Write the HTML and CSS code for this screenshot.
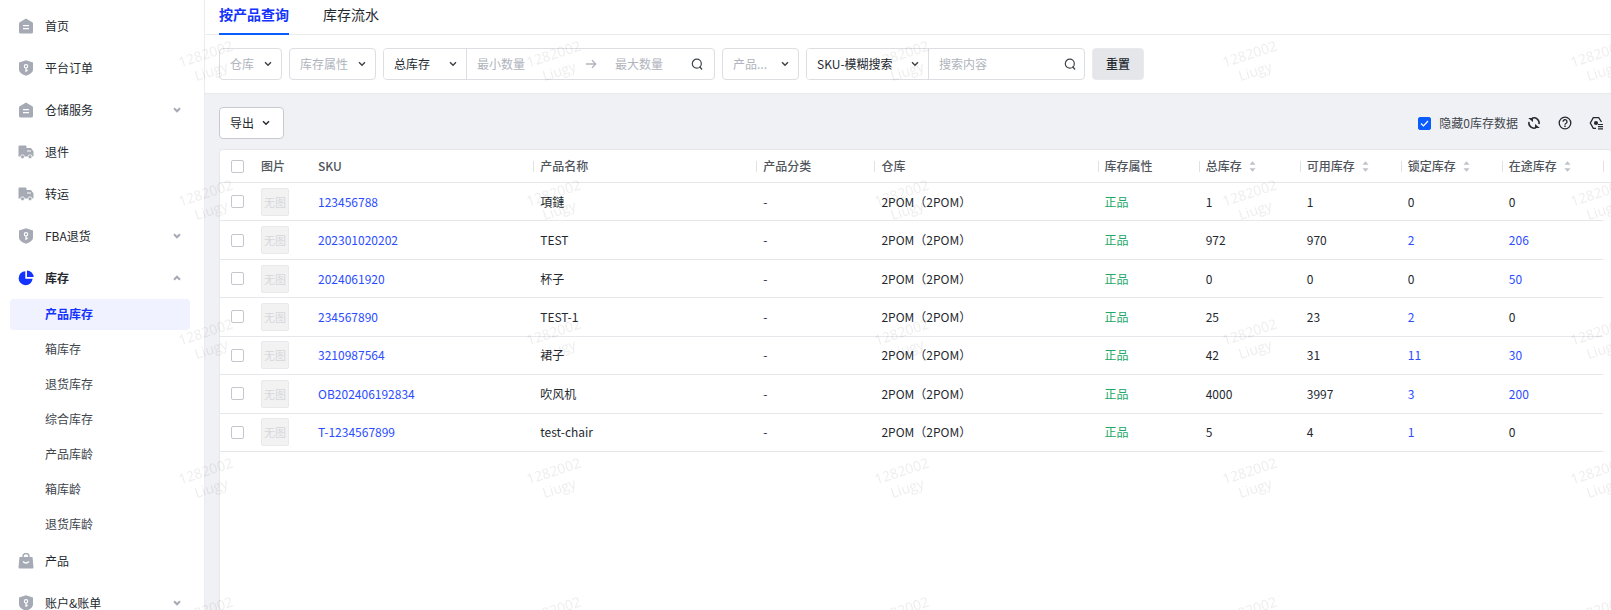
FILE: index.html
```html
<!DOCTYPE html>
<html lang="zh-CN">
<head>
  <meta charset="UTF-8">
  <meta name="viewport" content="width=device-width, initial-scale=1.0">
  <title>产品库存</title>
  <link rel="stylesheet" href="styles.css">
</head>
<body>
  <!-- icons -->
  <svg class="sprite" aria-hidden="true">
    <symbol id="i-home" viewBox="0 0 16 16"><path d="M8 .5 14.300 4.200Q15 4.700 15 5.500V14Q15 15.500 13.500 15.500H2.500Q1 15.500 1 14V5.500Q1 4.700 1.700 4.200Z" fill="currentColor"/><path d="M5 7.700h6M5 10.700h6" stroke="#fff" stroke-width="1.200"/></symbol>
    <symbol id="i-shield" viewBox="0 0 16 16"><path d="M8 .3 15 2.500V9.500Q15 13.500 8 15.800 1 13.500 1 9.500V2.500Z" fill="currentColor"/><circle cx="8" cy="6.300" r="1.700" fill="none" stroke="#fff" stroke-width="1.100"/><path d="M8 8v4M8 10.300h1.800" stroke="#fff" stroke-width="1.200"/></symbol>
    <symbol id="i-truck" viewBox="0 0 16 16"><path d="M1.500 1.500h6Q8.500 1.500 8.500 2.500V4H13l2.500 3.500V12.500H.5V2.500Q.5 1.500 1.500 1.500Z" fill="currentColor"/><path d="M9 7h4" stroke="#fff"/><circle cx="4.500" cy="12.800" r="2" fill="currentColor" stroke="#fff" stroke-width=".8"/><circle cx="12" cy="12.800" r="2" fill="currentColor" stroke="#fff" stroke-width=".8"/></symbol>
    <symbol id="i-pie" viewBox="0 0 16 16"><path d="M7.300 1.200V8.700H14.600A7 7 0 1 1 7.300 1.200Z" fill="currentColor"/><path d="M9 .4A7 7 0 0 1 15.700 7.100H9Z" fill="currentColor"/></symbol>
    <symbol id="i-bag" viewBox="0 0 16 16"><path d="M5 5V3.500a3 3 0 0 1 6 0V5" fill="none" stroke="currentColor" stroke-width="1.500"/><path d="M1.500 4h13l1 10.500q0 1-1 1h-13q-1 0-1-1Z" fill="currentColor"/><path d="M5 8.500q3 3 6 0" fill="none" stroke="#fff" stroke-width="1.300"/></symbol>
    <symbol id="i-down" viewBox="0 0 8 8"><path d="m1 2.300 3 3 3-3" fill="none" stroke="currentColor" stroke-width="1.500"/></symbol>
    <symbol id="i-fold" viewBox="0 0 8 8"><path d="m1 2.300 3 3 3-3" fill="none" stroke="currentColor" stroke-width="2"/></symbol>
    <symbol id="i-up" viewBox="0 0 8 8"><path d="m1 5.700 3-3 3 3" fill="none" stroke="currentColor" stroke-width="2"/></symbol>
    <symbol id="i-arrow" viewBox="0 0 12 12"><path d="M1 6h9.500M7 2.300 10.700 6 7 9.700" fill="none" stroke="currentColor" stroke-width="1.300"/></symbol>
    <symbol id="i-search" viewBox="0 0 12 12"><circle cx="5.800" cy="5.700" r="4.500" fill="none" stroke="currentColor" stroke-width="1.200"/><path d="m8.500 8.500 2.500 3" stroke="currentColor" stroke-width="1.300"/></symbol>
    <symbol id="i-refresh" viewBox="0 0 14 14"><path d="M5 2.200A5.200 5.200 0 0 1 12 8.200M9 11.800A5.200 5.200 0 0 1 2 5.800" fill="none" stroke="currentColor" stroke-width="1.500"/><path d="M1.200 2H6V6ZM12.800 12H8V8Z" fill="currentColor"/></symbol>
    <symbol id="i-help" viewBox="0 0 14 14"><circle cx="7" cy="7" r="5.800" fill="none" stroke="currentColor" stroke-width="1.300"/><path d="M5 5.800a2 2 0 1 1 2.900 1.700Q7 8 7 8.700" fill="none" stroke="currentColor" stroke-width="1.300"/><path d="M7 9.500v1.400" stroke="currentColor" stroke-width="1.400"/></symbol>
    <symbol id="i-setting" viewBox="0 0 14 14"><path d="M7 12.300H4.300L1.300 7l3-5.300h5.400L12.500 6" fill="none" stroke="currentColor" stroke-width="1.300"/><circle cx="7" cy="7" r="2.100" fill="currentColor"/><path d="M9 8.500h5M9 10.700h5M9 12.900h5" stroke="currentColor" stroke-width="1.200"/></symbol>
    <symbol id="i-sort" viewBox="0 0 8 12"><path d="M4 0 7.500 4H.5ZM4 12 .5 8H7.500Z" fill="currentColor"/></symbol>
  </svg>

  <div class="layout">
    <nav class="sidebar">
      <ul class="menu">
        <li><a href="#"><svg class="menu-icon"><use href="#i-home"/></svg>首页</a></li>
        <li><a href="#"><svg class="menu-icon"><use href="#i-shield"/></svg>平台订单</a></li>
        <li><a href="#"><svg class="menu-icon"><use href="#i-home"/></svg>仓储服务<svg class="caret"><use href="#i-fold"/></svg></a></li>
        <li><a href="#"><svg class="menu-icon"><use href="#i-truck"/></svg>退件</a></li>
        <li><a href="#"><svg class="menu-icon"><use href="#i-truck"/></svg>转运</a></li>
        <li><a href="#"><svg class="menu-icon"><use href="#i-shield"/></svg>FBA退货<svg class="caret"><use href="#i-fold"/></svg></a></li>
        <li class="open">
          <a href="#"><svg class="menu-icon"><use href="#i-pie"/></svg>库存<svg class="caret"><use href="#i-up"/></svg></a>
          <ul class="submenu">
            <li><a class="active" href="#">产品库存</a></li>
            <li><a href="#">箱库存</a></li>
            <li><a href="#">退货库存</a></li>
            <li><a href="#">综合库存</a></li>
            <li><a href="#">产品库龄</a></li>
            <li><a href="#">箱库龄</a></li>
            <li><a href="#">退货库龄</a></li>
          </ul>
        </li>
        <li><a href="#"><svg class="menu-icon"><use href="#i-bag"/></svg>产品</a></li>
        <li><a href="#"><svg class="menu-icon"><use href="#i-shield"/></svg>账户&amp;账单<svg class="caret"><use href="#i-fold"/></svg></a></li>
      </ul>
    </nav>

    <main class="main">
      <header class="head">
        <div class="tabs">
          <a class="tab active" href="#">按产品查询</a>
          <a class="tab" href="#">库存流水</a>
        </div>
        <form class="filters">
          <select class="field w-store empty" aria-label="仓库"><option>仓库</option></select>
          <select class="field w-attr empty" aria-label="库存属性"><option>库存属性</option></select>
          <div class="field group w-range">
            <select class="w-type" aria-label="数量类型"><option>总库存</option></select>
            <input class="min" type="text" placeholder="最小数量" aria-label="最小数量">
            <svg class="arrow"><use href="#i-arrow"/></svg>
            <input type="text" placeholder="最大数量" aria-label="最大数量">
            <svg class="search"><use href="#i-search"/></svg>
          </div>
          <select class="field w-cat empty" aria-label="产品分类"><option>产品...</option></select>
          <div class="field group w-search">
            <select class="w-mode" aria-label="搜索方式"><option>SKU-模糊搜索</option></select>
            <input type="text" placeholder="搜索内容" aria-label="搜索内容">
            <svg class="search"><use href="#i-search"/></svg>
          </div>
          <button class="reset" type="reset">重置</button>
        </form>
      </header>

      <section class="content">
        <div class="toolbar">
          <button class="export">导出<svg class="caret"><use href="#i-down"/></svg></button>
          <div class="tools">
            <label class="hide-zero"><input type="checkbox" checked>隐藏0库存数据</label>
            <button class="tool" aria-label="刷新"><svg><use href="#i-refresh"/></svg></button>
            <button class="tool" aria-label="帮助"><svg><use href="#i-help"/></svg></button>
            <button class="tool" aria-label="设置"><svg><use href="#i-setting"/></svg></button>
          </div>
        </div>

        <div class="card">
          <table>
            <colgroup>
              <col class="c-check"><col class="c-img"><col class="c-sku"><col class="c-wide"><col class="c-cat"><col class="c-wide">
              <col class="c-num"><col class="c-num"><col class="c-num"><col class="c-num"><col class="c-num"><col class="c-gutter">
            </colgroup>
            <thead>
              <tr>
                <th class="check"><input type="checkbox" aria-label="全选"></th>
                <th>图片</th>
                <th>SKU</th>
                <th class="sep">产品名称</th>
                <th class="sep">产品分类</th>
                <th class="sep">仓库</th>
                <th class="sep">库存属性</th>
                <th class="sep">总库存<svg class="sort"><use href="#i-sort"/></svg></th>
                <th class="sep">可用库存<svg class="sort"><use href="#i-sort"/></svg></th>
                <th class="sep">锁定库存<svg class="sort"><use href="#i-sort"/></svg></th>
                <th class="sep">在途库存<svg class="sort"><use href="#i-sort"/></svg></th>
                <th class="sep gutter"></th>
              </tr>
            </thead>
            <tbody>
              <tr>
                <td class="check"><input type="checkbox" aria-label="123456788"></td>
                <td><div class="thumb">无图</div></td>
                <td><a href="#">123456788</a></td>
                <td>項鏈</td><td>-</td><td>2POM（2POM）</td>
                <td class="good">正品</td>
                <td>1</td><td>1</td><td>0</td><td>0</td><td class="gutter"></td>
              </tr>
              <tr>
                <td class="check"><input type="checkbox" aria-label="202301020202"></td>
                <td><div class="thumb">无图</div></td>
                <td><a href="#">202301020202</a></td>
                <td>TEST</td><td>-</td><td>2POM（2POM）</td>
                <td class="good">正品</td>
                <td>972</td><td>970</td><td><a href="#">2</a></td><td><a href="#">206</a></td><td class="gutter"></td>
              </tr>
              <tr>
                <td class="check"><input type="checkbox" aria-label="2024061920"></td>
                <td><div class="thumb">无图</div></td>
                <td><a href="#">2024061920</a></td>
                <td>杯子</td><td>-</td><td>2POM（2POM）</td>
                <td class="good">正品</td>
                <td>0</td><td>0</td><td>0</td><td><a href="#">50</a></td><td class="gutter"></td>
              </tr>
              <tr>
                <td class="check"><input type="checkbox" aria-label="234567890"></td>
                <td><div class="thumb">无图</div></td>
                <td><a href="#">234567890</a></td>
                <td>TEST-1</td><td>-</td><td>2POM（2POM）</td>
                <td class="good">正品</td>
                <td>25</td><td>23</td><td><a href="#">2</a></td><td>0</td><td class="gutter"></td>
              </tr>
              <tr>
                <td class="check"><input type="checkbox" aria-label="3210987564"></td>
                <td><div class="thumb">无图</div></td>
                <td><a href="#">3210987564</a></td>
                <td>裙子</td><td>-</td><td>2POM（2POM）</td>
                <td class="good">正品</td>
                <td>42</td><td>31</td><td><a href="#">11</a></td><td><a href="#">30</a></td><td class="gutter"></td>
              </tr>
              <tr>
                <td class="check"><input type="checkbox" aria-label="OB202406192834"></td>
                <td><div class="thumb">无图</div></td>
                <td><a href="#">OB202406192834</a></td>
                <td>吹风机</td><td>-</td><td>2POM（2POM）</td>
                <td class="good">正品</td>
                <td>4000</td><td>3997</td><td><a href="#">3</a></td><td><a href="#">200</a></td><td class="gutter"></td>
              </tr>
              <tr>
                <td class="check"><input type="checkbox" aria-label="T-1234567899"></td>
                <td><div class="thumb">无图</div></td>
                <td><a href="#">T-1234567899</a></td>
                <td>test-chair</td><td>-</td><td>2POM（2POM）</td>
                <td class="good">正品</td>
                <td>5</td><td>4</td><td><a href="#">1</a></td><td>0</td><td class="gutter"></td>
              </tr>
            </tbody>
          </table>
        </div>
      </section>
    </main>
  </div>

  <svg class="watermark" aria-hidden="true">
    <defs>
      <pattern id="wm" x="32" y="-15" width="348" height="139" patternUnits="userSpaceOnUse">
        <g transform="translate(174 70) rotate(-18)" text-anchor="middle">
          <text x="0" y="4">1282002</text>
          <text x="0" y="22">Liugy</text>
        </g>
      </pattern>
    </defs>
    <rect width="100%" height="100%" fill="url(#wm)"/>
  </svg>
</body>
</html>
```
FILE: styles.css
```css
* {
  box-sizing: border-box;
}
body {
  margin: 0;
  font-family: "Noto Sans CJK SC", sans-serif;
  font-size: 12px;
  line-height: 18px;
  color: #24292f;
  overflow: hidden;
}
a {
  color: inherit;
  text-decoration: none;
}
ul {
  list-style: none;
  margin: 0;
  padding: 0;
}
button, input, select {
  font: inherit;
  color: inherit;
}
button {
  cursor: pointer;
}
.sprite {
  display: none;
}
.layout {
  display: flex;
  height: 100vh;
}

/* sidebar */
.sidebar {
  flex: none;
  width: 204px;
  padding: 5px 14px 0 10px;
  overflow: hidden;
}
.menu > li > a {
  display: flex;
  align-items: center;
  height: 42px;
  padding: 0 9px 0 8px;
}
.menu-icon {
  width: 16px;
  height: 16px;
  margin-right: 11px;
  color: #a5aab4;
}
.caret {
  width: 8px;
  height: 8px;
}
.menu .caret {
  margin-left: auto;
  color: #a5aab4;
}
.open > a {
  font-weight: 700;
}
.open > a .menu-icon {
  color: #1433ff;
}
.submenu {
  display: flex;
  flex-direction: column;
  gap: 4px;
}
.submenu a {
  display: block;
  padding: 6px 0 7px 35px;
  border-radius: 4px;
  color: #40454c;
}
.submenu a.active {
  background: #f0f2ff;
  color: #1433ff;
  font-weight: 700;
}

/* tabs + filters */
.main {
  flex: 1;
  min-width: 0;
  display: flex;
  flex-direction: column;
  border-left: 1px solid #ebecef;
  background: #f0f1f5;
}
.head {
  background: #fff;
}
.tabs {
  display: flex;
  gap: 34px;
  padding: 0 14px;
  border-bottom: 1px solid #ebecef;
}
.tab {
  height: 35px;
  margin-bottom: -1px;
  padding-top: 4px;
  font-size: 14px;
  line-height: 20px;
}
.tab.active {
  color: #1433ff;
  font-weight: 700;
  border-bottom: 2px solid #0a5cff;
}
.filters {
  display: flex;
  gap: 7px;
  padding: 13px 14px;
}
.field {
  height: 32px;
  border: 1px solid #dcdee2;
  border-radius: 4px;
  background-color: #fff;
}
select {
  appearance: none;
  padding: 0 10px;
  border: 0;
  background: #fff url("data:image/svg+xml,%3Csvg xmlns='http://www.w3.org/2000/svg' width='8' height='8'%3E%3Cpath d='m1 2.300 3 3 3-3' fill='none' stroke='%2340454c' stroke-width='1.500'/%3E%3C/svg%3E") no-repeat right 9px center;
}
select.empty {
  color: #b0b4bc;
}
.group {
  display: flex;
  align-items: center;
  overflow: hidden;
}
.group select {
  height: 100%;
  border-right: 1px solid #dcdee2;
}
.group input {
  flex: 1;
  min-width: 0;
  padding: 0 10px;
  border: 0;
  outline: 0;
  background: none;
}
.group .min {
  flex: none;
  width: 110px;
}
.group input::placeholder {
  color: #b0b4bc;
}
.group .search {
  flex: none;
  width: 12px;
  height: 12px;
  margin-right: 11px;
  color: #40454c;
}
.w-search .search {
  margin-right: 8px;
}
.group .arrow {
  flex: none;
  width: 12px;
  height: 12px;
  margin: 0 8px;
  color: #b0b4bc;
}
.w-store { width: 63px; }
.w-attr { width: 87px; }
.w-range { width: 332px; }
.w-type { width: 83px; }
.w-cat { width: 77px; }
.w-search { width: 279px; }
.w-mode { width: 122px; }
.reset {
  width: 52px;
  height: 32px;
  padding: 0;
  border: 1px solid #e9eaed;
  border-radius: 4px;
  background: #e4e6e9;
  font-weight: 500;
}

/* content */
.content {
  flex: 1;
  display: flex;
  flex-direction: column;
  padding: 13px 0 0 14px;
  border-top: 1px solid #e8e9ed;
}
.toolbar {
  display: flex;
  align-items: center;
  justify-content: space-between;
  padding-right: 8px;
  margin-bottom: 10px;
}
.export {
  display: flex;
  align-items: center;
  gap: 8px;
  height: 32px;
  padding: 0 13px 0 10px;
  border: 1px solid #c8cacf;
  border-radius: 4px;
  background: #fff;
}
.tools {
  display: flex;
  align-items: center;
  gap: 17px;
}
.hide-zero {
  display: flex;
  align-items: center;
  gap: 8px;
  margin-right: -8px;
  color: #40454c;
}
.tool {
  display: flex;
  padding: 0;
  border: 0;
  background: none;
}
.tool svg {
  width: 14px;
  height: 14px;
}
input[type="checkbox"] {
  appearance: none;
  display: block;
  width: 13px;
  height: 13px;
  margin: 0;
  border: 1px solid #c4c7cd;
  border-radius: 2px;
  background: #fff;
}
input[type="checkbox"]:checked {
  border-color: #0a5cff;
  background: #0a5cff url("data:image/svg+xml,%3Csvg xmlns='http://www.w3.org/2000/svg' width='11' height='11'%3E%3Cpath d='m2 5.500 2.500 2.500 4.500-5' fill='none' stroke='%23fff' stroke-width='1.200'/%3E%3C/svg%3E") center;
}
.card {
  flex: 1;
  border: 1px solid #e6e7eb;
  border-width: 1px 0 0 1px;
  border-radius: 4px 4px 0 0;
  background: #fff;
}
table {
  width: 100%;
  height: 302px;
  table-layout: fixed;
  border-collapse: separate;
  border-spacing: 0;
}
.c-check { width: 34px; }
.c-img { width: 57px; }
.c-sku { width: 222px; }
.c-wide { width: 223px; }
.c-cat { width: 118px; }
.c-num { width: 101px; }
.c-gutter { width: 8px; }
th, td {
  padding: 0 7px;
  text-align: left;
  border-bottom: 1px solid #e6e7eb;
}
th {
  height: 33px;
  color: #50555c;
  font-weight: 500;
}
th.sep {
  background: linear-gradient(#dfe1e5, #dfe1e5) no-repeat left center / 1px 11px;
}
.check {
  padding: 0 0 0 11px;
}
.gutter {
  padding: 0;
}
td.gutter {
  border-bottom: 0;
}
td a {
  color: #2b4dff;
}
.good {
  color: #22a866;
}
.thumb {
  width: 28px;
  height: 28px;
  border: 1px solid #e9e9eb;
  border-radius: 2px;
  background: #f2f2f3;
  color: #d6d7da;
  font-size: 11px;
  line-height: 26px;
  text-align: center;
}
.sort {
  width: 7px;
  height: 11px;
  margin-left: 7px;
  vertical-align: -1px;
  color: #bfc2c8;
}

/* watermark over the whole page */
.watermark {
  position: fixed;
  inset: 0;
  width: 100%;
  height: 100%;
  pointer-events: none;
}
.watermark text {
  font-family: "Open Sans", sans-serif;
  font-size: 14px;
  fill: rgba(0, 0, 0, 0.07);
}
```
